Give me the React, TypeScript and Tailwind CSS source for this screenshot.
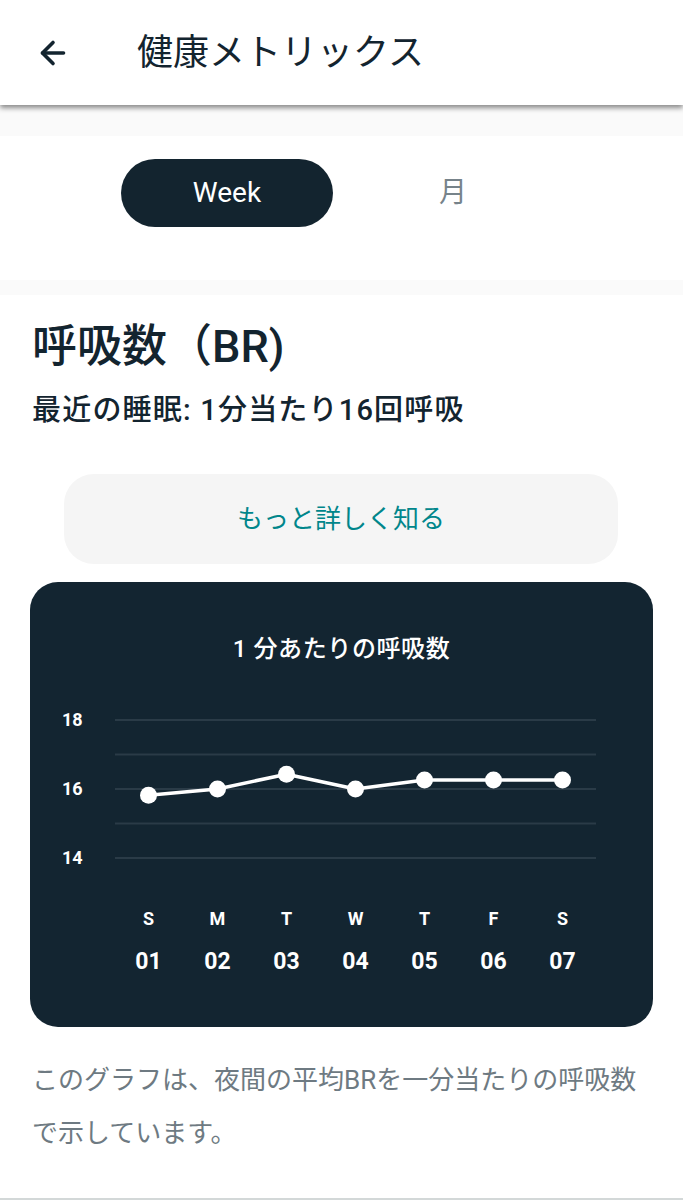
import { ArrowLeft } from "lucide-react";

const days = [
  { d: "S", n: "01", v: 15.82 },
  { d: "M", n: "02", v: 16.0 },
  { d: "T", n: "03", v: 16.43 },
  { d: "W", n: "04", v: 16.0 },
  { d: "T", n: "05", v: 16.26 },
  { d: "F", n: "06", v: 16.26 },
  { d: "S", n: "07", v: 16.26 },
];

// plot geometry: 18 -> y 19, 14 -> y 157
const gridY = [19, 53.5, 88, 122.5, 157];
const toY = (v: number) => 19 + (18 - v) * 34.5;
const toX = (i: number) => 34.5 + i * 69;

function BreathChart() {
  const pts = days.map((day, i) => `${toX(i)},${toY(day.v)}`).join(" ");
  return (
    <div className="rounded-[28px] bg-[#132531] pb-[50px] pt-[51px] text-white">
      <h2 className="text-center text-[24px] font-medium leading-[32px] tracking-wide">1 分あたりの呼吸数</h2>

      <div className="mt-[36px] flex items-start pl-[32px]">
        <div className="mt-[8px] flex h-[160px] w-[52px] flex-col justify-between text-[18px] font-bold leading-[22px]">
          <span>18</span>
          <span>16</span>
          <span>14</span>
        </div>
        <svg width="483" height="170" viewBox="0 0 483 170" className="block">
          {gridY.map((y) => (
            <line key={y} x1="1" x2="482" y1={y} y2={y} stroke="#2a3b47" strokeWidth="2" />
          ))}
          <polyline points={pts} fill="none" stroke="#ffffff" strokeWidth="3.5" strokeLinejoin="round" />
          {days.map((day, i) => (
            <circle key={i} cx={toX(i)} cy={toY(day.v)} r="8.5" fill="#ffffff" />
          ))}
        </svg>
      </div>

      <div className="ml-[84px] mt-[36px] grid w-[483px] grid-cols-7 text-center">
        {days.map((day, i) => (
          <span key={i} className="text-[18px] font-bold leading-[24px]">{day.d}</span>
        ))}
      </div>
      <div className="ml-[84px] mt-[16px] grid w-[483px] grid-cols-7 text-center">
        {days.map((day, i) => (
          <span key={i} className="text-[23px] font-bold leading-[30px]">{day.n}</span>
        ))}
      </div>
    </div>
  );
}

export default function App() {
  return (
    <div className="h-[1200px] overflow-hidden border-b-2 border-[#d3d8d8] bg-white text-[#13242f] [font-family:Roboto,'Noto_Sans_CJK_JP',sans-serif]">
      <header className="relative z-10 flex h-[105px] items-center bg-white shadow-[0_3px_5px_rgba(0,0,0,0.45)]">
        <ArrowLeft className="ml-[35px] h-[36px] w-[36px]" strokeWidth={2.4} />
        <h1 className="ml-[66px] text-[36px] font-normal leading-none">健康メトリックス</h1>
      </header>

      <div className="h-[31px] bg-[#fafafa]" />

      <section className="flex h-[144px] items-start bg-white pt-[23px]">
        <button className="ml-[121px] flex h-[68px] w-[212px] items-center justify-center rounded-full bg-[#13242f] text-[28px] text-white">
          Week
        </button>
        <button className="ml-[14px] flex h-[68px] w-[212px] items-center justify-center text-[28px] text-[#77838a]">
          月
        </button>
      </section>

      <div className="h-[15px] bg-[#fafafa]" />

      <main className="px-[30px]">
        <div className="px-[2px]">
          <h2 className="mt-[24px] text-[45px] font-medium leading-[56px]">呼吸数（BR)</h2>
          <p className="mt-[17px] text-[29px] font-medium leading-[36px] tracking-[1.2px]">最近の睡眠: 1分当たり16回呼吸</p>
        </div>

        <button className="mx-[34px] mt-[46px] flex h-[90px] w-[554px] items-center justify-center rounded-[30px] bg-[#f5f5f5] text-[26px] text-[#00868b]">
          もっと詳しく知る
        </button>

        <div className="mt-[18px]">
          <BreathChart />
        </div>

        <p className="mt-[27px] px-[2px] text-[26px] leading-[53px] text-[#6e7a82]">
          このグラフは、夜間の平均BRを一分当たりの呼吸数
          <br />
          で示しています。
        </p>
      </main>
    </div>
  );
}
